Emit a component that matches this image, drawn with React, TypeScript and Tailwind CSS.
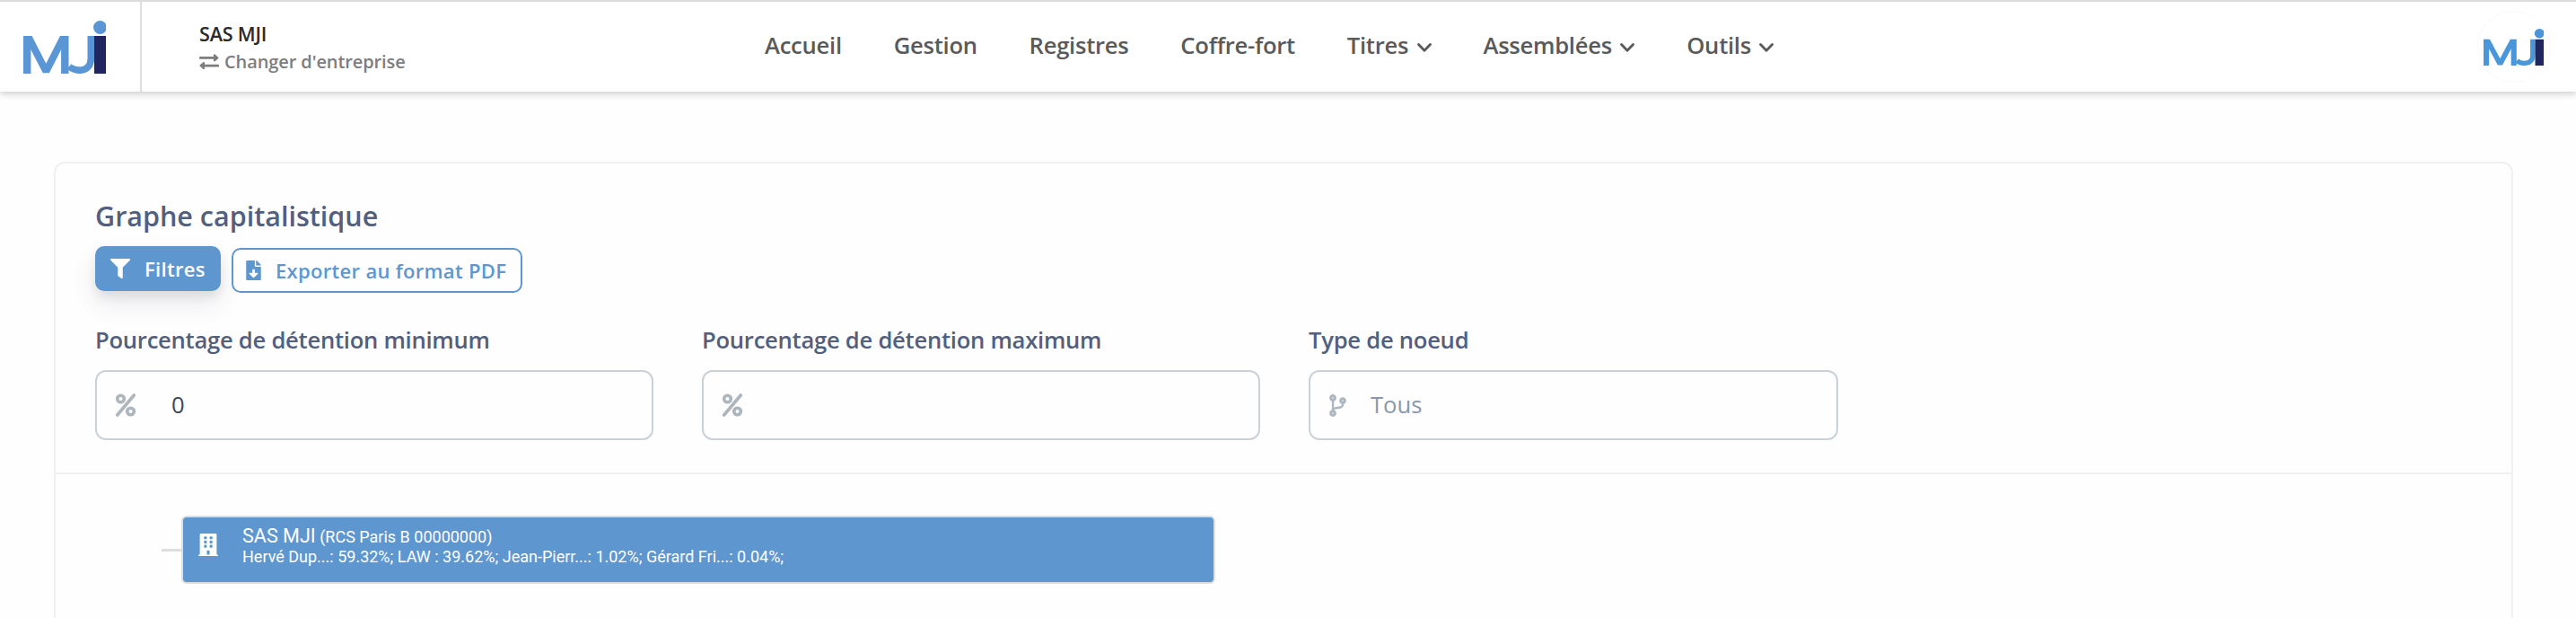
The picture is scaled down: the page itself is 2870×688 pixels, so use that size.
import type { ReactNode } from 'react'
import { FaBuilding, FaCodeBranch, FaFilter } from 'react-icons/fa'

interface NavItem {
  label: string
  menu?: boolean
}

const navItems: NavItem[] = [
  { label: 'Accueil' },
  { label: 'Gestion' },
  { label: 'Registres' },
  { label: 'Coffre-fort' },
  { label: 'Titres', menu: true },
  { label: 'Assemblées', menu: true },
  { label: 'Outils', menu: true },
]

function Logo({ className, color }: { className: string; color: string }) {
  return (
    <svg viewBox="0 0 92 59" preserveAspectRatio="none" className={className}>
      <svg x="0" y="17" width="51" height="42" viewBox="0 0 51 42" fill="none" stroke={color} strokeWidth="8.4">
        <path d="M4.200 0V42M46.300 0V42" />
        <path d="M2.500 -5L25.300 39.500L48 -5" strokeWidth="8" strokeLinejoin="bevel" />
      </svg>
      <path d="M51 51C57 56.500 75.300 59 75.300 42V17" fill="none" stroke={color} strokeWidth="7.600" />
      <rect x="79" y="17" width="13" height="42" fill="#20265f" />
      <circle cx="85.500" cy="7.500" r="7.500" fill={color} />
    </svg>
  )
}

function ChevronIcon() {
  return (
    <svg viewBox="0 0 16 10" className="mt-1 ml-[9.5px] h-[10px] w-4" fill="none" stroke="currentColor" strokeWidth="2.8" strokeLinecap="round" strokeLinejoin="round">
      <path d="M1.500 1.500L8 8.300L14.500 1.500" />
    </svg>
  )
}

function SwapIcon() {
  return (
    <svg viewBox="0 0 22 18" className="h-[18px] w-[22px]" fill="currentColor">
      <path d="M.8 2.900H16V1.300c0-.9 1-1.300 1.600-.7l3.500 3.100c.5.4.5 1.100 0 1.500l-3.500 3.100c-.6.5-1.600.1-1.600-.7V5.800H.8c-.5 0-.8-.3-.8-.8V3.700c0-.5.3-.8.8-.8z" />
      <path d="M21.200 11.700H6V9.900c0-.9-1-1.300-1.600-.7L.8 12.300c-.4.4-.4 1.100 0 1.500l3.600 3.100c.6.5 1.600.1 1.600-.7v-1.600h15.200c.5 0 .8-.3.8-.8v-1.300c0-.5-.3-.8-.8-.8z" />
    </svg>
  )
}

function PercentIcon() {
  return (
    <svg viewBox="0 0 22 26" className="h-[26px] w-[22px]" fill="none" stroke="currentColor" strokeWidth="3.600" strokeLinecap="round">
      <circle cx="5.500" cy="6" r="3.800" />
      <circle cx="16.500" cy="20" r="3.800" />
      <path d="M20.300 2L1.700 24" />
    </svg>
  )
}

function FileDownloadIcon() {
  return (
    <svg viewBox="0 0 384 512" className="h-[22px] w-[17px]" fill="currentColor">
      <path d="M224 136V0H24C10.700 0 0 10.700 0 24v464c0 13.300 10.700 24 24 24h336c13.300 0 24-10.700 24-24V160H248c-13.200 0-24-10.800-24-24zm76.450 211.360l-96.420 95.700c-6.650 6.610-17.390 6.610-24.040 0l-96.420-95.700C73.420 337.290 80.540 320 94.820 320H160v-80c0-8.840 7.160-16 16-16h32c8.840 0 16 7.160 16 16v80h65.180c14.280 0 21.400 17.290 11.270 27.360zM377 105L279.100 7c-4.500-4.500-10.600-7-17-7H256v128h128v-6.100c0-6.300-2.500-12.400-7-16.900z" />
    </svg>
  )
}

interface FieldProps {
  label: string
  icon: ReactNode
  className: string
  children?: ReactNode
}

function Field({ label, icon, className, children }: FieldProps) {
  return (
    <div className={className}>
      <label className="block h-9 text-[25.6px] leading-9 font-semibold tracking-[-0.01em] whitespace-nowrap text-[#525f7f]">{label}</label>
      <div className="mt-[15px] flex h-[78px] items-center rounded-[12px] border-2 border-[#cad1d7] pl-[21px] text-[25.6px] text-[#adb5bd]">
        {icon}
        {children}
      </div>
    </div>
  )
}

function Header() {
  return (
    <header className="flex h-[102px] border-t-2 border-[#dcdcdc] bg-white shadow-[0_2px_8px_rgba(0,0,0,0.22)]">
      <div className="w-[158px] border-r-2 border-[#dedede] pt-[21px] pl-[26px]">
        <Logo className="h-[59px] w-[92px]" color="#5a96d5" />
      </div>
      <div className="w-[694px] pt-[20px] pl-16">
        <div className="text-[21.6px] leading-[31px] font-semibold tracking-[-0.01em] text-[#2b2b2b]">SAS MJI</div>
        <div className="flex items-center gap-[6px] text-[20px] leading-[32px] font-semibold tracking-[-0.005em] text-[#7d7d7d]">
          <SwapIcon />
          Changer d'entreprise
        </div>
      </div>
      <nav className="flex flex-1 items-center gap-[57.8px] pb-[1px] text-[25.6px] font-semibold tracking-[-0.01em] text-[#5a5a5a]">
        {navItems.map(item => (
          <a key={item.label} className="flex items-center whitespace-nowrap">
            {item.label}
            {item.menu && <ChevronIcon />}
          </a>
        ))}
      </nav>
      <div className="mt-[10px] mr-7 h-20 w-[82px] rounded-full border border-[#fafafa] pt-[19px] pl-[6px]">
        <Logo className="h-[41px] w-[67px]" color="#4a96da" />
      </div>
    </header>
  )
}

export default function App() {
  return (
    <div className="h-[688px] overflow-hidden bg-[#fefefe] font-['Open_Sans',sans-serif]">
      <Header />
      <main className="mt-[78px] mr-[70px] ml-[60px] h-[600px] rounded-[12px] border-2 border-[#f0f0f0]">
        <section className="h-[346px] border-b-2 border-[#f0f0f0] pt-[35px] pl-11">
          <h1 className="text-[30.5px] leading-[46px] font-semibold text-[#525f7f]">Graphe capitalistique</h1>
          <div className="mt-[11px] flex gap-3 text-[22px] font-semibold tracking-[0.014em]">
            <button className="flex h-[50px] w-[140px] items-center rounded-[10px] bg-[#5e96d0] pl-[17px] text-white shadow-[0_14px_28px_rgba(50,50,93,0.1),0_6px_12px_rgba(0,0,0,0.08)]">
              <FaFilter className="size-[22px]" />
              <span className="ml-4">Filtres</span>
            </button>
            <button className="mt-[2px] flex h-[50px] w-[324px] items-center rounded-[10px] border-2 border-[#5e96d0] pl-[14px] whitespace-nowrap text-[#5e96d0]">
              <FileDownloadIcon />
              <span className="ml-4">Exporter au format PDF</span>
            </button>
          </div>
          <div className="mt-[35px] flex gap-[54px]">
            <Field label="Pourcentage de détention minimum" icon={<PercentIcon />} className="w-[622px]">
              <span className="ml-[40px] text-[#3c4858]">0</span>
            </Field>
            <Field label="Pourcentage de détention maximum" icon={<PercentIcon />} className="w-[622px]" />
            <Field label="Type de noeud" icon={<FaCodeBranch className="h-[25px] w-[19px]" />} className="w-[590px]">
              <span className="ml-[27px] text-[#8898aa]">Tous</span>
            </Field>
          </div>
        </section>
        <section className="flex items-center pt-[46px] pl-[118px] font-[Roboto,sans-serif]">
          <div className="h-[3px] w-[22px] bg-[#dedede]" />
          <div className="flex h-[76px] w-[1152px] rounded-[6px] border-2 border-[#dedede] bg-[#5e96d0] text-white">
            <FaBuilding className="mt-[18px] ml-[17px] h-[25px] w-[22px]" />
            <div className="mt-[9px] ml-[27px] text-[18px] whitespace-nowrap">
              <div className="leading-[24px]">
                <span className="text-[21.6px]">SAS MJI</span> (RCS Paris B 00000000)
              </div>
              <div className="leading-[20px]">Hervé Dup...: 59.32%; LAW : 39.62%; Jean-Pierr...: 1.02%; Gérard Fri...: 0.04%;</div>
            </div>
          </div>
        </section>
      </main>
    </div>
  )
}
